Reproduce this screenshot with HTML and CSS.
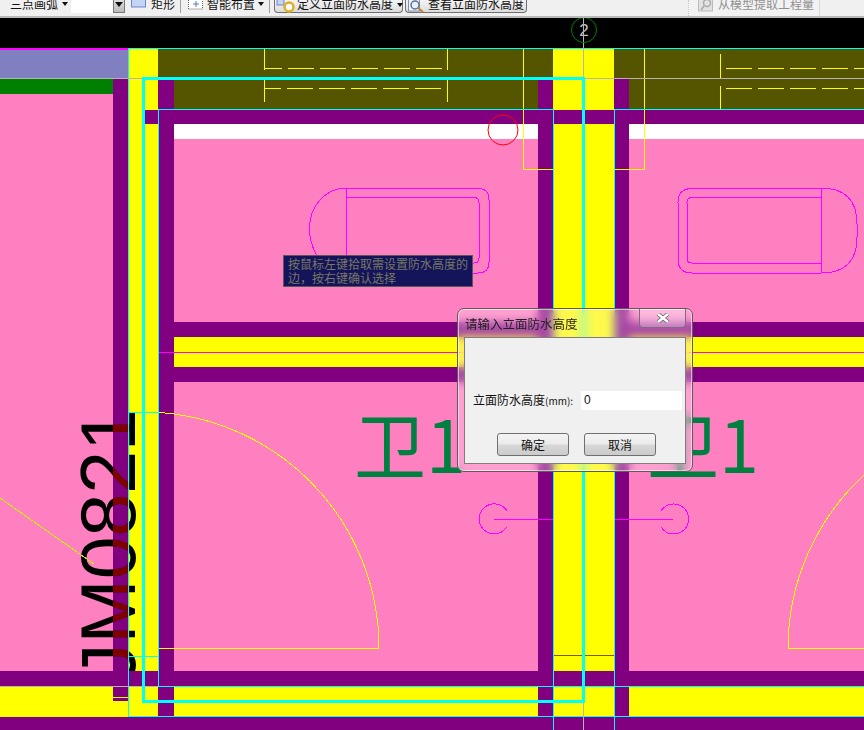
FILE: index.html
```html
<!DOCTYPE html>
<html lang="zh">
<head>
<meta charset="utf-8">
<title>立面防水高度</title>
<link rel="stylesheet" href="styles.css">
</head>
<body>
<div class="app">
  <header class="toolbar">
    <span class="tool t-arc">三点画弧</span><span class="caret"></span>
    <span class="combo"><span class="combo-btn"><span class="caret dark"></span></span></span>
    <svg class="ico i-rect" width="15" height="8" viewBox="0 0 15 8"><rect class="i-blue" x="0.5" y="-5" width="14" height="12"/></svg>
    <span class="tool t-rect">矩形</span>
    <span class="sep s1"></span>
    <svg class="ico i-smart" width="15" height="10" viewBox="0 0 15 10"><rect class="i-dots" x="0.5" y="-3" width="14" height="12"/><path class="i-plus" d="M8 1v6M5 4h6"/></svg>
    <span class="tool t-smart">智能布置</span><span class="caret c2"></span>
    <span class="sep s2"></span>
    <span class="btn b1">
      <svg class="ico" width="21" height="14" viewBox="0 0 21 14"><rect class="i-blue" x="1" y="-2" width="7" height="7"/><circle class="i-ring" cx="13" cy="7" r="4.500"/></svg>
      <span class="btn-t">定义立面防水高度</span><span class="caret c3"></span>
    </span>
    <span class="btn b2">
      <svg class="ico" width="18" height="14" viewBox="0 0 18 14"><rect class="i-page" x="0.5" y="-3" width="11" height="14"/><circle class="i-lens" cx="7" cy="5" r="4"/><path class="i-handle" d="M10 8l5 4"/></svg>
      <span class="btn-t">查看立面防水高度</span>
    </span>
    <span class="group">
      <svg class="ico" width="15" height="12" viewBox="0 0 15 12"><rect class="i-grey" x="0.5" y="-3" width="14" height="14"/><circle class="i-glens" cx="9" cy="3" r="3.500"/><path class="i-glens" d="M6 6l-3 4"/></svg>
      <span class="btn-t grey">从模型提取工程量</span>
    </span>
  </header>

  <main class="canvas">
    <svg class="drawing" width="864" height="712" viewBox="0 18 864 712">
      <defs>
        <clipPath id="band"><rect x="113" y="400" width="15" height="271"/></clipPath>
      </defs>
      <g class="crisp">
        <rect class="black" x="0" y="18" width="864" height="30"/>
        <rect class="pink" x="0" y="49" width="864" height="681"/>
        <rect class="peri" x="0" y="49" width="128" height="29"/>
        <rect class="green" x="0" y="79" width="113" height="15"/>
        <rect class="olive" x="158" y="49" width="706" height="60"/>
        <rect class="white" x="174" y="124" width="690" height="15"/>

        <rect class="purple" x="113" y="79" width="15" height="592"/>
        <rect class="purple" x="158" y="79" width="16" height="592"/>
        <rect class="purple" x="538" y="79" width="15" height="592"/>
        <rect class="purple" x="614" y="79" width="15" height="592"/>
        <rect class="purple" x="145" y="110" width="719" height="14"/>

        <rect class="yellow" x="128" y="49" width="30" height="61"/>
        <rect class="yellow" x="128" y="110" width="15" height="14"/>
        <rect class="yellow" x="128" y="124" width="30" height="547"/>
        <rect class="yellow" x="553" y="49" width="61" height="61"/>
        <rect class="yellow" x="553" y="124" width="61" height="547"/>

        <rect class="purple" x="174" y="322" width="364" height="15"/>
        <rect class="purple" x="629" y="322" width="235" height="15"/>
        <rect class="yellow" x="174" y="337" width="364" height="30"/>
        <rect class="yellow" x="629" y="337" width="235" height="30"/>
        <rect class="purple" x="174" y="367" width="364" height="15"/>
        <rect class="purple" x="629" y="367" width="235" height="15"/>
      </g>

      <text class="jm" transform="translate(135 682) rotate(-90)">JM0821</text>
      <g clip-path="url(#band)">
        <text class="jm red" transform="translate(135 682) rotate(-90)">JM0821</text>
      </g>

      <g class="crisp">
        <rect class="purple" x="0" y="671" width="864" height="16"/>
        <rect class="yellow" x="0" y="687" width="864" height="30"/>
        <rect class="purple" x="113" y="687" width="15" height="14"/>
        <rect class="purple" x="158" y="687" width="16" height="30"/>
        <rect class="purple" x="538" y="687" width="15" height="30"/>
        <rect class="purple" x="614" y="687" width="15" height="30"/>
        <rect class="purple" x="0" y="717" width="864" height="13"/>
      </g>

      <text class="wei" x="354" y="473">卫1</text>
      <text class="wei" x="647" y="473">卫1</text>
      <text class="axis" x="584" y="36">2</text>

      <g class="fine-y">
        <path d="M264.500 49v21M264.500 80v22M447.500 49v21M447.500 80v22M720.500 54v25M720.500 86v23"/>
        <path d="M264 68.500h18M288 68.500h26M320 68.500h26M352 68.500h26M384 68.500h26M416 68.500h26"/>
        <path d="M264 88.500h17M287 88.500h26M319 88.500h26M351 88.500h26M383 88.500h26M415 88.500h26"/>
        <path d="M726 68.500h26M758 68.500h26M790 68.500h26M822 68.500h26M854 68.500h10"/>
        <path d="M726 88.500h26M758 88.500h26M790 88.500h26M822 88.500h26M854 88.500h10"/>
        <path d="M523.500 49v120.500h121V49"/>
        <path d="M159 648.500h220"/>
        <path d="M143 412A236 236 0 0 1 379 648"/>
        <path d="M788 648.500h76"/>
        <path d="M864 475A236 236 0 0 0 788 648"/>
        <path d="M113 697.500h15"/>
      </g>
      <path class="fine-lime" d="M0 498L94 564"/>
      <path class="fine-brown" d="M553 655.500h61M553 716.500h61M614.500 687v30"/>

      <g class="fine-m">
        <path d="M159 352.500h394M629 352.500h235"/>
        <path d="M346.500 188v85M346.500 197.500H474q5 0 5 5V258q0 5-5 5h-11"/>
        <path d="M346 188.500H478q11 0 11 11V262q0 11-11 11h-16M309.500 228c0-22 16-40 37-40M309.500 228c0 12 3 20 7 27"/>
        <path d="M821.500 188v85M821 197.500H692q-5 0-5 5V258q0 5 5 5H821"/>
        <path d="M821 188.500H692q-14 0-14 14V259q0 14 14 14H821q36 0 36-36V224q0-36-36-36"/>
        <path d="M507 511A15 15 0 1 0 506.500 527.500"/>
        <path d="M661 527A15 15 0 1 0 661 511"/>
        <path d="M494 519.500h59M615 519.500h58"/>
      </g>

      <g class="fine-c">
        <path d="M128 48.500h736M128.500 48v668.500H864M158.500 109.500V686M128 412.500h30M128 656.500h30M158 109.500h395.500V730M614.500 730V109.500H864M158 686.500h706"/>
      </g>
      <path class="fine-mag" d="M0 48.500h128"/>
      <path class="fine-g" d="M583.500 18V78M585 78.500h279M0 78.500h143M583.500 703V730M0 686.500h158"/>
      <path class="thick-c" d="M143.500 78.500H583.500V701.500H143.500Z"/>
      <circle class="ring-r" cx="503" cy="130" r="15"/>
      <circle class="ring-g" cx="584" cy="30" r="12.500"/>
    </svg>

    <div class="tip">按鼠标左键拾取需设置防水高度的<br>边，按右键确认选择</div>

    <section class="dialog">
      <div class="titlebar">
        <span class="title">请输入立面防水高度</span>
        <span class="close">
          <svg width="16" height="10" viewBox="0 0 16 10"><path class="x-o" d="M3 1l10 8M13 1L3 9"/><path class="x-i" d="M3 1l10 8M13 1L3 9"/></svg>
        </span>
      </div>
      <div class="pane">
        <div class="field">
          <label class="label">立面防水高度<span class="unit">(mm):</span></label>
          <span class="input">0</span>
        </div>
        <div class="actions">
          <span class="push">确定</span>
          <span class="push">取消</span>
        </div>
      </div>
    </section>
  </main>
</div>
</body>
</html>
```
FILE: styles.css
```css
* { box-sizing: border-box; }
html, body { margin: 0; padding: 0; }
body {
  width: 864px;
  height: 730px;
  overflow: hidden;
  font-family: "Noto Sans CJK SC", "Liberation Sans", sans-serif;
  font-size: 12px;
  background: #000;
}
.app { display: flex; flex-direction: column; width: 864px; height: 730px; }

/* toolbar: only the bottom sliver is in view */
.toolbar {
  flex: 0 0 18px;
  height: 18px;
  display: flex;
  align-items: flex-start;
  background: #f0f0f0;
  border-bottom: 2px solid #b8b8b8;
  overflow: hidden;
  padding-left: 10px;
  color: #111;
  line-height: 14px;
}
.tool { height: 14px; margin-top: -3px; white-space: nowrap; }
.caret {
  flex: none;
  width: 0; height: 0;
  border-left: 3px solid transparent;
  border-right: 3px solid transparent;
  border-top: 4px solid #111;
  margin-top: 2px;
}
.t-arc { width: 48px; }
.t-arc + .caret { margin-left: 4px; }
.combo {
  width: 54px; height: 13px;
  margin-left: 3px;
  background: #fff;
  display: flex; justify-content: flex-end;
}
.combo-btn {
  width: 12px; height: 13px;
  background: linear-gradient(#ddd, #bbb);
  border: 1px solid #777;
  border-top: 0;
  display: flex; justify-content: center;
}
.caret.dark { border-left-width: 4px; border-right-width: 4px; border-top-width: 5px; margin-top: 2px; }
.ico { flex: none; }
.i-rect { margin-left: 6px; }
.i-blue { fill: #c4d4f4; stroke: #7088c8; }
.t-rect { margin-left: 5px; width: 25px; }
.sep { flex: none; width: 1px; height: 13px; background: #a0a0a0; }
.s1 { margin-left: 4px; }
.i-smart { margin-left: 7px; }
.i-dots { fill: #fff; stroke: #666; stroke-dasharray: 1 1; }
.i-plus { fill: none; stroke: #5878b0; }
.t-smart { margin-left: 4px; width: 48px; }
.c2 { margin-left: 3px; }
.s2 { margin-left: 5px; }
.btn {
  flex: none;
  display: flex; align-items: flex-start;
  height: 13px;
  border: 1px solid #707070;
  border-top: 0;
  border-radius: 0 0 4px 4px;
  background: linear-gradient(#f4f4f4, #dcdcdc);
}
.b1 { width: 129px; margin-left: 4px; padding-left: 1px; }
.b2 { width: 122px; margin-left: 2px; padding-left: 2px; }
.btn-t { display: block; margin-top: -3px; line-height: 14px; white-space: nowrap; }
.b2 .btn-t { margin-left: 2px; }
.c3 { margin-left: 4px; margin-top: 3px; }
.i-ring { fill: #fff; stroke: #e0b020; stroke-width: 2.500; }
.i-page { fill: #eef2fa; stroke: #8090b0; }
.i-lens { fill: #e8f0ff; stroke: #607090; stroke-width: 1.500; }
.i-handle { stroke: #c08030; stroke-width: 2; }
.group {
  flex: none;
  display: flex; align-items: flex-start;
  height: 16px;
  width: 132px;
  margin-left: 161px;
  padding-left: 9px;
  border-right: 1px solid #d8d8d8;
  border-left: 1px dotted #c8c8c8;
  background: #f2f2f2;
}
.group .btn-t { margin-left: 5px; }
.grey { color: #909090; }
.i-grey { fill: #e2e2e2; stroke: #bbb; }
.i-glens { fill: none; stroke: #aaa; stroke-width: 1.500; }

/* drawing */
.canvas { position: relative; flex: 1 1 auto; background: #000; }
.drawing { display: block; position: absolute; left: 0; top: 0; }
.crisp { shape-rendering: crispEdges; }
.black { fill: #000; }
.pink { fill: #ff80c0; }
.peri { fill: #8080c0; }
.green { fill: #008000; }
.olive { fill: #555500; }
.white { fill: #fff; }
.purple { fill: #800080; }
.yellow { fill: #ffff00; }
.jm { font-family: "Liberation Sans", sans-serif; font-size: 77px; fill: #000; }
.jm.red { fill: #800000; }
.wei { font-family: "Noto Sans CJK SC", sans-serif; font-size: 72px; fill: #008040; }
.axis { font-family: "Liberation Sans", sans-serif; font-size: 17px; fill: #c0c0c0; text-anchor: middle; }
.fine-y, .fine-m, .fine-c, .fine-mag, .fine-g, .fine-lime, .fine-brown { fill: none; stroke-width: 1; shape-rendering: crispEdges; }
.fine-y { stroke: #ffff00; }
.fine-m { stroke: #ff00ff; }
.fine-c { stroke: #00ffff; }
.fine-mag { stroke: #ff00ff; stroke-width: 2; }
.fine-g { stroke: #b4b4b4; }
.fine-lime { stroke: #c8f000; }
.fine-brown { stroke: #7a5a10; }
.thick-c { fill: none; stroke: #00ffff; stroke-width: 3; shape-rendering: crispEdges; }
.ring-r { fill: none; stroke: #ff0000; }
.ring-g { fill: none; stroke: #008000; }

/* tooltip */
.tip {
  position: absolute;
  left: 283px; top: 237px;
  width: 190px; height: 32px;
  padding: 1px 0 0 4px;
  background: #14145a;
  border: 1px solid #585858;
  color: #787864;
  font-size: 12px;
  line-height: 14px;
  white-space: nowrap;
}

/* dialog */
.dialog {
  position: absolute;
  left: 457px; top: 290px;
  width: 236px; height: 164px;
  display: flex; flex-direction: column;
  padding: 0 6px 7px;
  border: 1px solid #5c5c5c;
  border-radius: 7px;
  background: rgba(255, 235, 250, .3);
  -webkit-backdrop-filter: blur(5px);
  backdrop-filter: blur(5px);
  box-shadow: inset 0 0 0 1px rgba(255, 255, 255, .55);
}
.titlebar { position: relative; flex: 0 0 28px; display: flex; align-items: center; padding-left: 1px; }
.title { font-size: 12.500px; color: #222; }
.close {
  position: absolute;
  right: 0; top: 0;
  width: 47px; height: 19px;
  display: flex; align-items: center; justify-content: center;
  border: 1px solid #7d6c80;
  border-top: 0;
  border-radius: 0 0 4px 4px;
  background: rgba(255, 255, 255, .25);
}
.x-o { fill: none; stroke: #606060; stroke-width: 4; }
.x-i { fill: none; stroke: #fff; stroke-width: 2.500; }
.pane {
  flex: 1 1 auto;
  display: flex; flex-direction: column;
  background: #f0f0f0;
  border: 1px solid #7e7e7e;
  padding: 52px 0 0 8px;
}
.field { display: flex; align-items: center; height: 20px; }
.label { width: 108px; margin-top: -2px; color: #111; white-space: nowrap; font-size: 12px; }
.unit { font-size: 10px; }
.input {
  width: 101px; height: 19px;
  padding-left: 3px;
  background: #fff;
  color: #111;
  line-height: 19px;
  font-family: "Liberation Sans", sans-serif;
}
.actions { display: flex; gap: 15px; margin-top: 23px; padding-left: 24px; }
.push {
  display: flex; align-items: center; justify-content: center;
  width: 72px; height: 23px;
  border: 1px solid #707070;
  border-radius: 3px;
  background: linear-gradient(#f4f4f4 0%, #ebebeb 48%, #d8d8d8 52%, #cbcbcb 100%);
  color: #111;
}
```
